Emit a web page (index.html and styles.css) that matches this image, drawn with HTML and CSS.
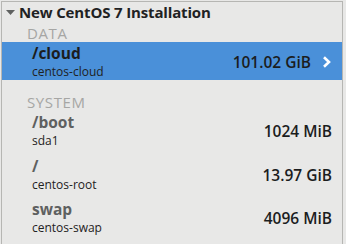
FILE: index.html
```html
<!DOCTYPE html>
<html>
<head>
<meta charset="utf-8">
<link rel="stylesheet" href="styles.css">
</head>
<body>
<div class="frame">
  <div class="header">
    <svg class="arrow" width="9" height="5" viewBox="0 0 9 5"><path d="M0 0 H9 L4.5 5 Z" fill="#5f6160"/></svg>
    <span class="title">New CentOS 7 Installation</span>
  </div>
  <div class="section">DATA</div>
  <div class="row selected">
    <div class="names">
      <div class="name">/cloud</div>
      <div class="sub">centos-cloud</div>
    </div>
    <div class="size">101.02 GiB</div>
    <svg class="chev" width="10" height="12" viewBox="0 0 10 12"><path d="M2 1.2 L7 6 L2 10.8" fill="none" stroke="#ffffff" stroke-width="2.6"/></svg>
  </div>
  <div class="section system">SYSTEM</div>
  <div class="rows">
    <div class="row">
      <div class="names">
        <div class="name dim">/boot</div>
        <div class="sub">sda1</div>
      </div>
      <div class="size">1024 MiB</div>
    </div>
    <div class="row">
      <div class="names">
        <div class="name dim">/</div>
        <div class="sub">centos-root</div>
      </div>
      <div class="size">13.97 GiB</div>
    </div>
    <div class="row">
      <div class="names">
        <div class="name dim">swap</div>
        <div class="sub">centos-swap</div>
      </div>
      <div class="size">4096 MiB</div>
    </div>
  </div>
</div>
</body>
</html>
```
FILE: styles.css
```css
html, body {
  margin: 0;
  padding: 0;
  background: #e8e8e7;
}
body {
  font-family: "Open Sans", "DejaVu Sans", sans-serif;
  color: #2e3436;
  width: 346px;
  height: 244px;
  overflow: hidden;
}
.frame {
  margin: 1px 3px 0 1px;
  border: 1px solid #b6b6b3;
  border-bottom: none;
  height: 243px;
  box-sizing: border-box;
}
.header {
  display: flex;
  align-items: center;
  height: 21px;
  padding-left: 4px;
}
.arrow {
  margin-right: 4px;
  margin-top: -1px;
}
.title {
  font-size: 15px;
  font-weight: 700;
  line-height: 21px;
  letter-spacing: -0.15px;
  color: #1f2223;
}
.section {
  padding: 2px 0 0 25px;
  font-size: 15px;
  line-height: 17px;
  letter-spacing: 0.6px;
  color: #a6a6a4;
}
.section.system {
  margin-top: 12px;
}
.rows {
  display: flex;
  flex-direction: column;
  gap: 5.5px;
}
.row {
  display: flex;
  align-items: center;
  height: 38px;
  padding: 0 10px 0 30px;
}
.row.selected {
  background: #4a90d9;
}
.names {
  flex: 1;
  padding-top: 1px;
}
.name {
  font-size: 15.5px;
  font-weight: 700;
  line-height: 21px;
  color: #1b1d1e;
}
.name.dim {
  color: #5e6060;
}
.sub {
  font-size: 12px;
  line-height: 16px;
  color: #1f2223;
}
.size {
  font-size: 15.5px;
  font-weight: 600;
  color: #1b1d1e;
  padding-top: 2px;
}
.chev {
  margin-left: 11px;
  margin-top: 1px;
}
```
